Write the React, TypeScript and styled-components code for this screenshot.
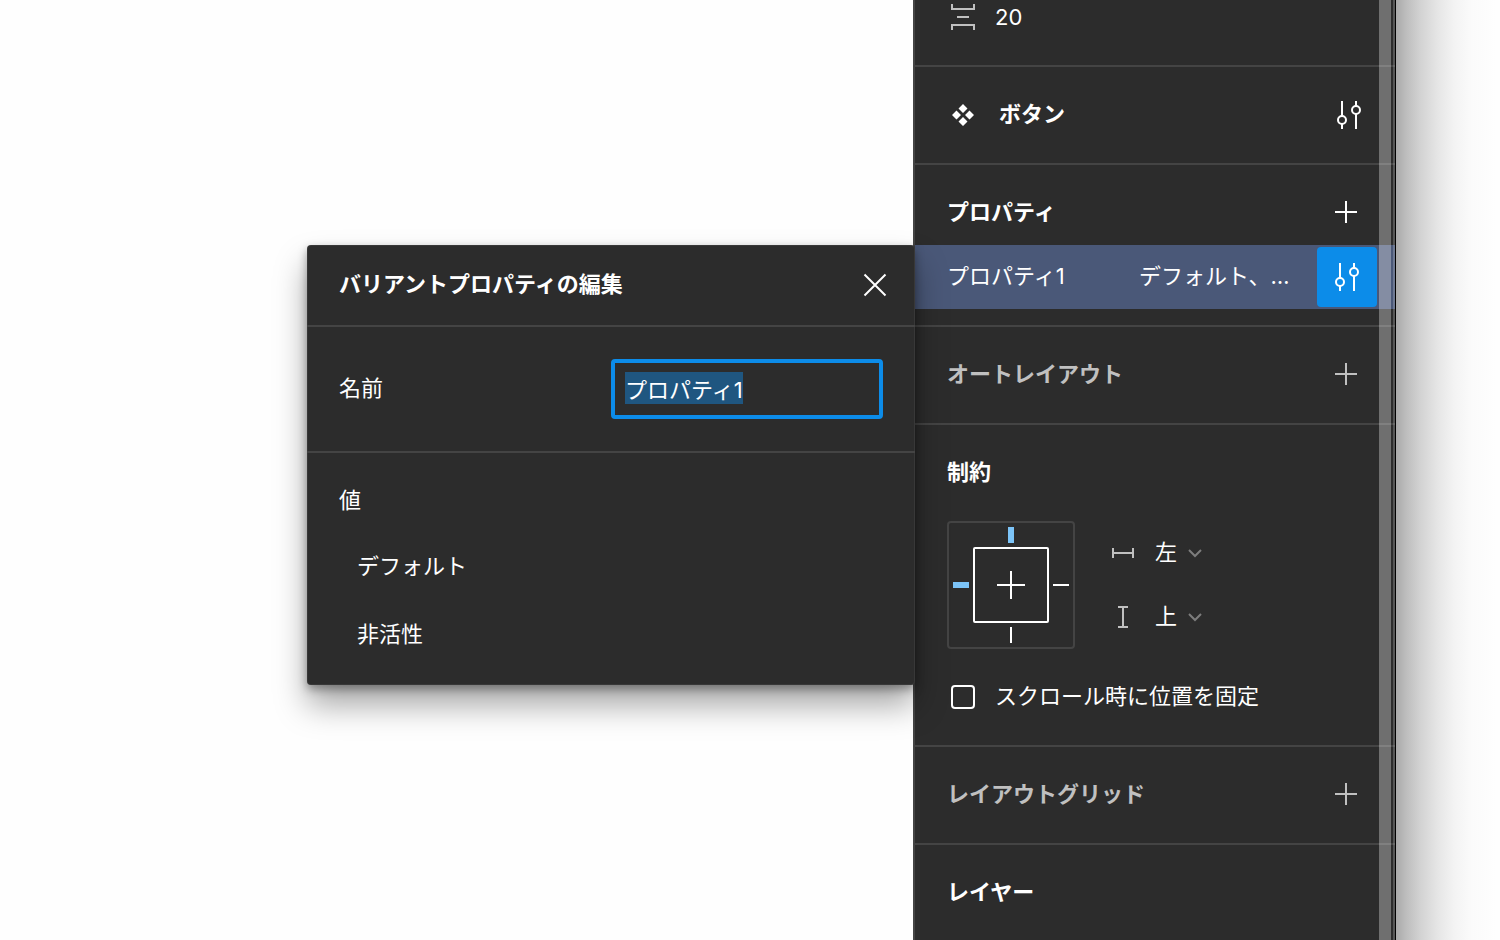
import React, { useEffect, useRef } from 'react';
import styled, { createGlobalStyle } from 'styled-components';

const color = {
  surface: '#2c2c2c',
  line: '#444444',
  text: '#ffffff',
  muted: '#c0c0c0',
  faint: '#7d7d7d',
  accent: '#0c8ce9',
  selection: '#1f5680',
  row: '#4a5878',
  pin: '#7cc4f8',
};

const GlobalStyle = createGlobalStyle`
  *, *::before, *::after { box-sizing: border-box; }
  body {
    margin: 0;
    background: #fefefe;
    color: ${color.text};
    font-family: Inter, "Noto Sans CJK JP", sans-serif;
    font-size: 22px;
    line-height: 32px;
  }
  button, input, select { font: inherit; color: inherit; }
`;

const Page = styled.div`
  display: flex;
  height: 100vh;
  overflow: hidden;
`;

const Canvas = styled.main`
  flex: 1;
  min-width: 0;
`;

const Desktop = styled.div`
  flex: 0 0 104px;
  background: linear-gradient(
    to right,
    #a9a9a9 0,
    #bdbdbd 10px,
    #d2d2d2 24px,
    #e6e6e6 42px,
    #f3f3f3 58px,
    #fbfbfb 76px,
    #fefefe 100px
  );
`;

const Panel = styled.aside`
  position: relative;
  flex: 0 0 483px;
  background: ${color.surface};
  border-left: 2px solid ${color.line};
`;

const Scrollbar = styled.div`
  position: absolute;
  inset: 0 0 0 auto;
  width: 17px;
  display: flex;
`;

const Thumb = styled.div`
  width: 12px;
  margin-right: 2px;
  background: rgba(255, 255, 255, 0.32);
`;

const WindowEdge = styled.div`
  width: 3px;
  background: rgba(255, 255, 255, 0.2);
  border-right: 1px solid #000;
`;

const Section = styled.section`
  border-bottom: 2px solid ${color.line};
`;

const SectionHeader = styled.header<{ $compact?: boolean }>`
  display: flex;
  align-items: center;
  height: ${(p) => (p.$compact ? 80 : 96)}px;
  padding: ${(p) => (p.$compact ? 16 : 0)}px 17px 0 32px;
`;

const Title = styled.h2<{ $muted?: boolean }>`
  flex: 1;
  margin: 0;
  padding-bottom: 2px;
  font-size: 22px;
  font-weight: 700;
  color: ${(p) => (p.$muted ? color.muted : color.text)};
`;

const IconButton = styled.button<{ $active?: boolean; $muted?: boolean }>`
  display: grid;
  place-items: center;
  width: 60px;
  height: 60px;
  padding: 0;
  border: 0;
  border-radius: 4px;
  background: ${(p) => (p.$active ? color.accent : 'transparent')};
  color: ${(p) => (p.$muted ? color.muted : color.text)};
`;

const SpacingRow = styled.div`
  display: flex;
  align-items: center;
  gap: 20px;
  height: 34px;
  margin-bottom: 31px;
  padding-left: 36px;
  color: ${color.muted};
`;

const SpacingInput = styled.input`
  width: 120px;
  padding: 0;
  border: 0;
  outline: 0;
  background: none;
  color: ${color.text};
`;

const ComponentIconSlot = styled.span`
  display: grid;
  width: 52px;
  padding-left: 4px;
`;

const PropertyRow = styled.div`
  position: relative;
  display: grid;
  grid-template-columns: 192px 1fr 60px;
  align-items: center;
  height: 64px;
  margin-bottom: 16px;
  padding: 0 19px 0 32px;
  background: ${color.row};
`;

const Text = styled.span`
  padding-bottom: 2px;
`;

const Constraints = styled.div`
  display: flex;
  gap: 36px;
  padding-left: 32px;
`;

const Choices = styled.div`
  display: flex;
  flex-direction: column;
`;

const Choice = styled.label`
  display: flex;
  align-items: center;
  height: 64px;
  color: ${color.muted};
`;

const Select = styled.select`
  appearance: none;
  width: 22px;
  margin: 0 10px 0 20px;
  padding: 0 0 2px;
  border: 0;
  background: none;
  color: ${color.text};
`;

const CheckRow = styled.label`
  display: flex;
  align-items: center;
  gap: 20px;
  height: 96px;
  padding-left: 36px;
`;

const Checkbox = styled.input`
  appearance: none;
  width: 24px;
  height: 24px;
  margin: 0;
  border: 2px solid ${color.text};
  border-radius: 4px;
`;

const Popover = styled.div`
  position: absolute;
  top: 0;
  right: 100%;
  z-index: 1;
  width: 608px;
  border-radius: 4px;
  background: ${color.surface};
  box-shadow:
    0 20px 32px rgba(0, 0, 0, 0.35),
    0 4px 10px rgba(0, 0, 0, 0.35),
    inset 0 0 0 1px rgba(255, 255, 255, 0.06);
`;

const PopoverHeader = styled.header`
  display: flex;
  align-items: center;
  height: 82px;
  padding: 0 10px 0 32px;
  border-bottom: 2px solid ${color.line};
`;

const Field = styled.label`
  display: flex;
  align-items: center;
  justify-content: space-between;
  padding: 32px;
  border-bottom: 2px solid ${color.line};
`;

const NameInput = styled.input`
  width: 272px;
  height: 60px;
  padding: 0 10px 2px;
  border: 4px solid ${color.accent};
  border-radius: 4px;
  outline: 0;
  background: ${color.surface};
  &::selection {
    background: ${color.selection};
    color: ${color.text};
  }
`;

const Values = styled.div`
  padding: 16px 32px;
`;

const ValuesLabel = styled.div`
  display: flex;
  align-items: center;
  height: 64px;
`;

const ValueList = styled.ul`
  margin: 0;
  padding: 0 0 0 18px;
  list-style: none;
`;

const ValueItem = styled.li`
  display: flex;
  align-items: center;
  height: 68px;
`;

const Plus = () => (
  <svg width="30" height="26" fill="none" stroke="currentColor" strokeWidth="2">
    <path d="M12 1v22M1 12h22" />
  </svg>
);

const Sliders = () => (
  <svg width="28" height="28" fill="none" stroke="currentColor" strokeWidth="2">
    <path d="M7 0v15M7 23v5M21 0v5M21 13v15" />
    <circle cx="7" cy="19" r="4" />
    <circle cx="21" cy="9" r="4" />
  </svg>
);

const Close = () => (
  <svg width="24" height="24" fill="none" stroke="currentColor" strokeWidth="2">
    <path d="M1.500 1.500l21 21M22.500 1.500l-21 21" />
  </svg>
);

const VerticalSpacing = () => (
  <svg width="24" height="26" fill="none" stroke="currentColor" strokeWidth="2">
    <path d="M1 0v5h22V0M6 13h12M1 26v-5h22v5" />
  </svg>
);

const ComponentSet = () => (
  <svg width="24" height="24" fill="currentColor">
    <path d="M12 1l4.500 4.500L12 10 7.500 5.500zM12 14l4.500 4.500L12 23l-4.500-4.500zM5.500 7.500L10 12l-4.500 4.500L1 12zM18.500 7.500L23 12l-4.500 4.500L14 12z" />
  </svg>
);

const Horizontal = () => (
  <svg width="24" height="24" fill="none" stroke="currentColor" strokeWidth="2">
    <path d="M2 7v10M22 7v10M2 12h20" />
  </svg>
);

const Vertical = () => (
  <svg width="24" height="24" fill="none" stroke="currentColor" strokeWidth="2">
    <path d="M7 2h10M7 22h10M12 2v20" />
  </svg>
);

const Chevron = () => (
  <svg width="16" height="16" fill="none" stroke={color.faint} strokeWidth="2">
    <path d="M2 5l6 6 6-6" />
  </svg>
);

const ConstraintBox = () => (
  <svg width="128" height="128" fill="none" stroke={color.text} strokeWidth="2" role="img" aria-label="制約">
    <rect x="1" y="1" width="126" height="126" rx="3" stroke={color.line} />
    <rect x="27" y="27" width="74" height="74" rx="1" />
    <path d="M64 50v28M50 64h28M106 64h16M64 106v16" />
    <path d="M64 6v16M6 64h16" stroke={color.pin} strokeWidth="6" />
  </svg>
);

const AddButton = ({ muted }: { muted?: boolean }) => (
  <IconButton type="button" aria-label="追加" $muted={muted}>
    <Plus />
  </IconButton>
);

function VariantPopover() {
  const nameRef = useRef<HTMLInputElement>(null);

  useEffect(() => {
    nameRef.current?.focus({ preventScroll: true });
    nameRef.current?.select();
  }, []);

  return (
    <Popover role="dialog" aria-labelledby="variant-title">
      <PopoverHeader>
        <Title id="variant-title">バリアントプロパティの編集</Title>
        <IconButton type="button" aria-label="閉じる">
          <Close />
        </IconButton>
      </PopoverHeader>
      <Field>
        <Text>名前</Text>
        <NameInput ref={nameRef} type="text" defaultValue="プロパティ1" />
      </Field>
      <Values>
        <ValuesLabel>
          <Text>値</Text>
        </ValuesLabel>
        <ValueList>
          <ValueItem>
            <Text>デフォルト</Text>
          </ValueItem>
          <ValueItem>
            <Text>非活性</Text>
          </ValueItem>
        </ValueList>
      </Values>
    </Popover>
  );
}

export default function App() {
  return (
    <>
      <GlobalStyle />
      <Page>
        <Canvas />
        <Panel>
          <Section>
            <SpacingRow>
              <VerticalSpacing />
              <SpacingInput type="text" defaultValue="20" aria-label="間隔" />
            </SpacingRow>
          </Section>

          <Section>
            <SectionHeader>
              <ComponentIconSlot>
                <ComponentSet />
              </ComponentIconSlot>
              <Title>ボタン</Title>
              <IconButton type="button" aria-label="設定">
                <Sliders />
              </IconButton>
            </SectionHeader>
          </Section>

          <Section>
            <SectionHeader $compact>
              <Title>プロパティ</Title>
              <AddButton />
            </SectionHeader>
            <PropertyRow>
              <Text>プロパティ1</Text>
              <Text>デフォルト、…</Text>
              <IconButton type="button" aria-label="プロパティを編集" $active>
                <Sliders />
              </IconButton>
              <VariantPopover />
            </PropertyRow>
          </Section>

          <Section>
            <SectionHeader>
              <Title $muted>オートレイアウト</Title>
              <AddButton muted />
            </SectionHeader>
          </Section>

          <Section>
            <SectionHeader>
              <Title>制約</Title>
            </SectionHeader>
            <Constraints>
              <ConstraintBox />
              <Choices>
                <Choice>
                  <Horizontal />
                  <Select aria-label="水平方向の制約">
                    <option>左</option>
                  </Select>
                  <Chevron />
                </Choice>
                <Choice>
                  <Vertical />
                  <Select aria-label="垂直方向の制約">
                    <option>上</option>
                  </Select>
                  <Chevron />
                </Choice>
              </Choices>
            </Constraints>
            <CheckRow>
              <Checkbox type="checkbox" />
              <Text>スクロール時に位置を固定</Text>
            </CheckRow>
          </Section>

          <Section>
            <SectionHeader>
              <Title $muted>レイアウトグリッド</Title>
              <AddButton muted />
            </SectionHeader>
          </Section>

          <Section>
            <SectionHeader>
              <Title>レイヤー</Title>
            </SectionHeader>
          </Section>

          <Scrollbar aria-hidden="true">
            <Thumb />
            <WindowEdge />
          </Scrollbar>
        </Panel>
        <Desktop />
      </Page>
    </>
  );
}
